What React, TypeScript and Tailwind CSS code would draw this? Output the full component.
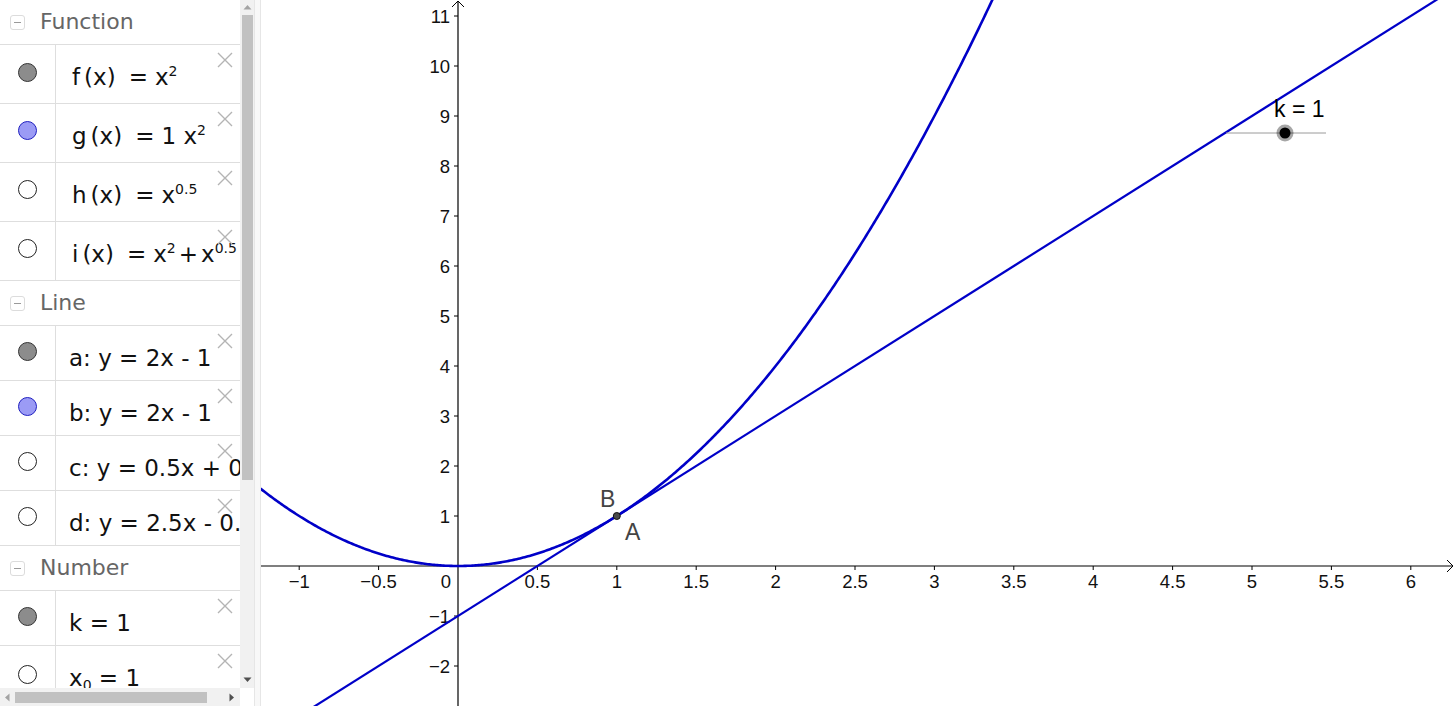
import type { ReactNode } from "react";

type Dot = "gray" | "blue" | "empty";

const OX = 197; // origin inside graphics view
const OY = 566;
const SX = 158.8;
const SY = 50;
const W = 1195;
const H = 706;

const px = (x: number) => OX + x * SX;
const py = (y: number) => OY - y * SY;

function plot(f: (x: number) => number, from: number, to: number, step = 0.01) {
  const pts: string[] = [];
  for (let x = from; x <= to + 1e-9; x += step) {
    pts.push(`${px(x).toFixed(2)},${py(f(x)).toFixed(2)}`);
  }
  return "M" + pts.join(" L");
}

function MinusBox() {
  return (
    <span className="flex h-[15px] w-[15px] items-center justify-center rounded-[3px] border border-[#dcdcdc]">
      <span className="h-px w-[7px] bg-[#9a9a9a]" />
    </span>
  );
}

function Header({ title, h }: { title: string; h: string }) {
  return (
    <div className={`flex items-center gap-[15px] pl-[10px] ${h}`}>
      <MinusBox />
      <span className="text-[22px] leading-none text-[#666]">{title}</span>
    </div>
  );
}

function Close() {
  return (
    <svg className="absolute left-[217px] top-[7px]" width="16" height="16" viewBox="0 0 16 16">
      <path d="M1 1 L15 15 M15 1 L1 15" stroke="#b4b4b4" strokeWidth="1.4" />
    </svg>
  );
}

function Circle({ kind }: { kind: Dot }) {
  const cls =
    kind === "gray"
      ? "bg-[#8c8c8c] border-[#333]"
      : kind === "blue"
        ? "bg-[#9b9bf5] border-[#2020c0]"
        : "bg-white border-[#222]";
  return <span className={`block h-[19px] w-[19px] rounded-full border ${cls}`} />;
}

function Row({
  kind,
  h,
  pt,
  pl = "pl-[13px]",
  children,
}: {
  kind: Dot;
  h: string;
  pt: string;
  pl?: string;
  children: ReactNode;
}) {
  return (
    <div className={`relative flex border-t border-[#dedede] ${h}`}>
      <div className={`flex w-[56px] shrink-0 justify-center border-r border-[#dedede] ${pt}`}>
        <Circle kind={kind} />
      </div>
      <div className={`whitespace-nowrap pt-[19px] text-[23px] leading-[26px] text-[#111] ${pl}`}>
        {children}
      </div>
      <Close />
    </div>
  );
}

const Sup = ({ children }: { children: ReactNode }) => (
  <sup className="relative top-[-9px] text-[14px]">{children}</sup>
);

function Fn({ name, children }: { name: string; children: ReactNode }) {
  return (
    <>
      {name}
      <span className="ml-[4px]">(x)</span>
      <span className="ml-[13px] mr-[7px]">=</span>
      {children}
    </>
  );
}

function AlgebraView() {
  return (
    <div className="w-[240px] overflow-hidden" style={{ fontFamily: '"DejaVu Sans", "Liberation Sans", sans-serif' }}>
      <Header title="Function" h="h-[44px]" />
      <Row kind="gray" h="h-[59px]" pt="pt-[18px]" pl="pl-[16px]">
        <Fn name="f">
          x<Sup>2</Sup>
        </Fn>
      </Row>
      <Row kind="blue" h="h-[59px]" pt="pt-[17px]" pl="pl-[16px]">
        <Fn name="g">
          1 x<Sup>2</Sup>
        </Fn>
      </Row>
      <Row kind="empty" h="h-[59px]" pt="pt-[17px]" pl="pl-[16px]">
        <Fn name="h">
          x<Sup>0.5</Sup>
        </Fn>
      </Row>
      <Row kind="empty" h="h-[59px]" pt="pt-[17px]" pl="pl-[16px]">
        <Fn name="i">
          x<Sup>2</Sup>
          <span className="mx-[3px]">+</span>x<Sup>0.5</Sup>
        </Fn>
      </Row>
      <div className="border-t border-[#dedede]">
        <Header title="Line" h="h-[44px]" />
      </div>
      <Row kind="gray" h="h-[55px]" pt="pt-[16px]">a: y = 2x - 1</Row>
      <Row kind="blue" h="h-[55px]" pt="pt-[16px]">b: y = 2x - 1</Row>
      <Row kind="empty" h="h-[55px]" pt="pt-[16px]">c: y = 0.5x + 0.5</Row>
      <Row kind="empty" h="h-[55px]" pt="pt-[16px]">d: y = 2.5x - 0.56</Row>
      <div className="border-t border-[#dedede]">
        <Header title="Number" h="h-[44px]" />
      </div>
      <Row kind="gray" h="h-[55px]" pt="pt-[16px]">k = 1</Row>
      <Row kind="empty" h="h-[55px]" pt="pt-[19px]">
        x<sub className="text-[14px]">0</sub> = 1
      </Row>
    </div>
  );
}

function VScroll() {
  return (
    <div className="flex w-[14px] flex-col items-center bg-[#f1f1f1]">
      <svg className="mt-[4px]" width="9" height="6" viewBox="0 0 9 6">
        <path d="M0.5 5.5 L4.5 1 L8.5 5.5 Z" fill="#a3a3a3" />
      </svg>
      <div className="mt-[5px] h-[465px] w-[11px] bg-[#c1c1c1]" />
      <div className="flex-1" />
      <svg className="mb-[5px]" width="9" height="6" viewBox="0 0 9 6">
        <path d="M0.5 0.5 L4.5 5 L8.5 0.5 Z" fill="#505050" />
      </svg>
    </div>
  );
}

function HScroll() {
  return (
    <div className="flex h-[18px]">
      <div className="flex w-[240px] items-center bg-[#f1f1f1] pl-[4px] pr-[5px]">
        <svg width="6" height="9" viewBox="0 0 6 9">
          <path d="M5.5 0.5 L1 4.5 L5.5 8.5 Z" fill="#a3a3a3" />
        </svg>
        <div className="ml-[5px] h-[11px] w-[192px] bg-[#c1c1c1]" />
        <div className="flex-1" />
        <svg width="6" height="9" viewBox="0 0 6 9">
          <path d="M0.5 0.5 L5 4.5 L0.5 8.5 Z" fill="#505050" />
        </svg>
      </div>
      <div className="w-[14px] bg-white" />
    </div>
  );
}

function fmt(v: number) {
  const s = String(v);
  return v < 0 ? "\u2212" + s.slice(1) : s;
}

function Graphics() {
  const xTicks: number[] = [];
  for (let v = -1; v <= 6; v += 0.5) xTicks.push(v);
  const yTicks: number[] = [];
  for (let v = -2; v <= 11; v++) if (v !== 0) yTicks.push(v);

  const parabola = plot((x) => x * x, -1.26, 3.4);
  const tangent = `M${px(-1.26)},${py(2 * -1.26 - 1)} L${px(6.4)},${py(2 * 6.4 - 1)}`;

  return (
    <svg width={W} height={H} viewBox={`0 0 ${W} ${H}`} className="block shrink-0">
      <g fontFamily='"Liberation Sans", Arial, sans-serif' fontSize="18.5" fill="#111">
        {/* axes */}
        <line x1="0" y1={OY} x2={W - 3} y2={OY} stroke="#000" strokeWidth="1.2" />
        <line x1={OX} y1="1" x2={OX} y2={H} stroke="#000" strokeWidth="1.2" />
        <path d={`M${W - 9},${OY - 6} L${W - 3},${OY} L${W - 9},${OY + 6}`} stroke="#000" fill="none" />
        <path d={`M${OX - 6},7 L${OX},1 L${OX + 6},7`} stroke="#000" fill="none" />

        {xTicks.map((v) => (
          <g key={"x" + v}>
            {v !== 0 && <line x1={px(v)} y1={OY} x2={px(v)} y2={OY + 4} stroke="#000" />}
            {v !== 0 && (
              <text x={px(v)} y={OY + 22} textAnchor="middle">
                {fmt(v)}
              </text>
            )}
          </g>
        ))}
        <text x={OX - 12} y={OY + 22} textAnchor="middle">
          0
        </text>
        {yTicks.map((v) => (
          <g key={"y" + v}>
            <line x1={OX - 4} y1={py(v)} x2={OX} y2={py(v)} stroke="#000" />
            <text x={OX - 8} y={py(v) + 7} textAnchor="end">
              {fmt(v)}
            </text>
          </g>
        ))}

        {/* curves */}
        <path d={parabola} stroke="#0000c8" strokeWidth="2.6" fill="none" />
        <path d={tangent} stroke="#0000c8" strokeWidth="2.2" fill="none" />

        {/* point A / B */}
        <circle cx={px(1)} cy={py(1)} r="3.5" fill="#4a4a4a" stroke="#111" strokeWidth="1" />
        <text x={339} y={507} fontSize="23" fill="#444">
          B
        </text>
        <text x={364} y={540} fontSize="23" fill="#444">
          A
        </text>

        {/* slider k */}
        <line x1="965" y1="133" x2="1065" y2="133" stroke="#9a9a9a" strokeWidth="1" />
        <circle cx="1024" cy="133" r="8.5" fill="#000" fillOpacity="0.35" />
        <circle cx="1024" cy="133" r="5.5" fill="#000" />
        <text x="1013" y="117" fontSize="23" fill="#000">
          k = 1
        </text>
      </g>
    </svg>
  );
}

export default function App() {
  return (
    <div className="flex h-[706px] w-[1456px] overflow-hidden bg-white">
      <div className="flex w-[254px] shrink-0 flex-col">
        <div className="flex h-[688px]">
          <AlgebraView />
          <VScroll />
        </div>
        <HScroll />
      </div>
      <div className="w-[7px] shrink-0 border-l border-r border-[#e6e6e6] bg-[#f8f8f8]" />
      <Graphics />
    </div>
  );
}
